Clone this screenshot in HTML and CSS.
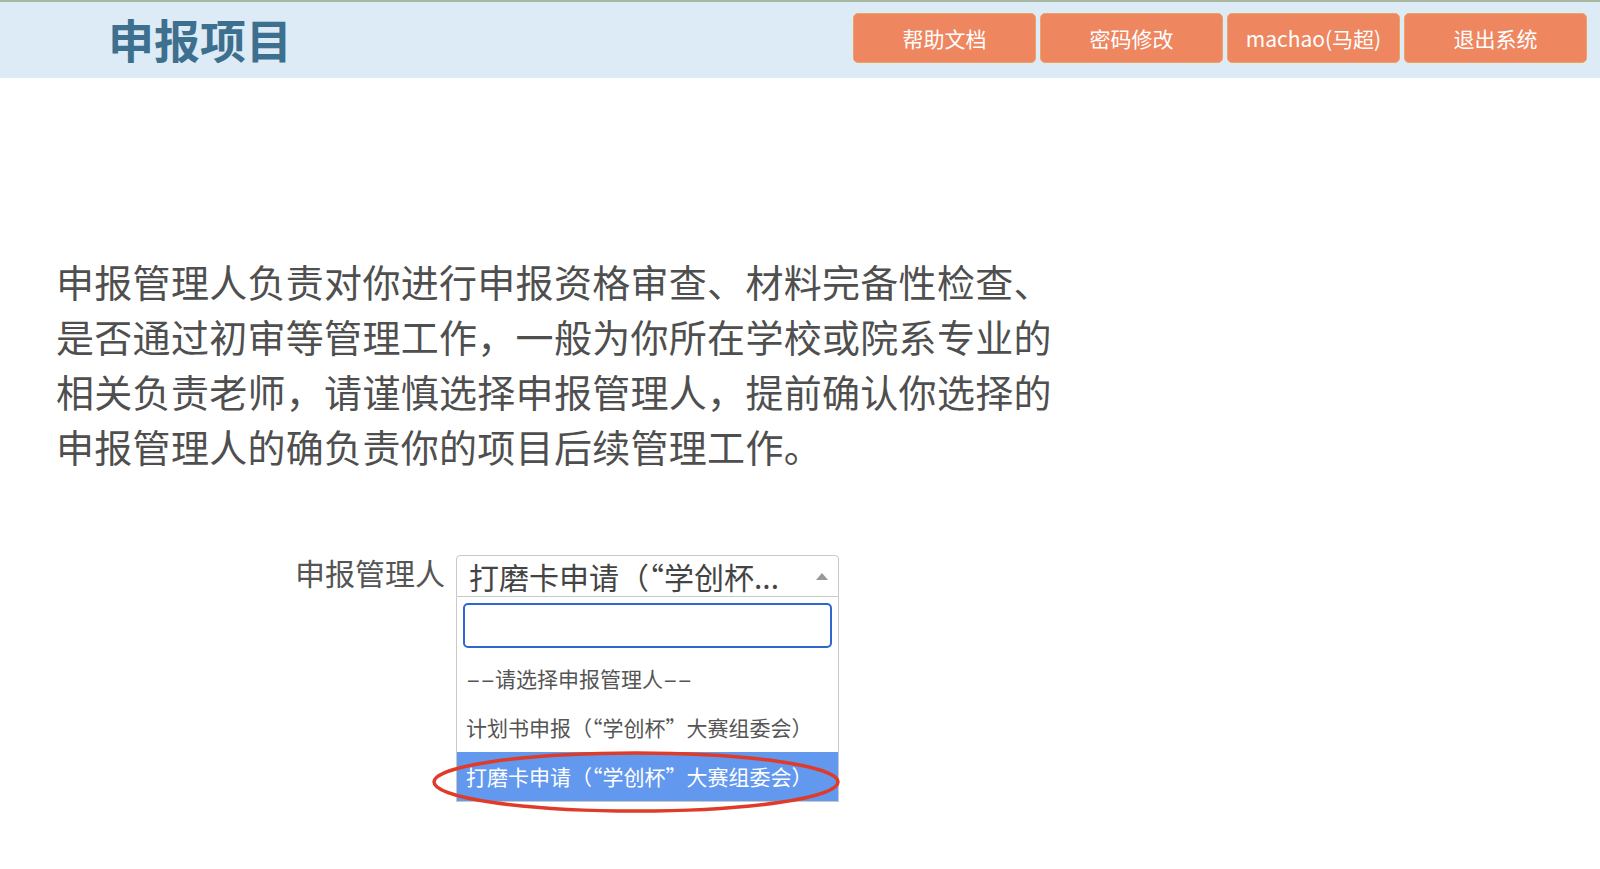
FILE: index.html
```html
<!DOCTYPE html>
<html lang="zh-CN">

<head>
    <meta charset="UTF-8">
    <title>申报项目</title>
    <link rel="stylesheet" href="styles.css">
</head>

<body>
    <div class="header">
        <h1 class="page-title">申报项目</h1>
        <div class="nav">
            <a class="nav-btn" href="#">帮助文档</a>
            <a class="nav-btn" href="#">密码修改</a>
            <a class="nav-btn user" href="#">machao(马超)</a>
            <a class="nav-btn" href="#">退出系统</a>
        </div>
    </div>

    <div class="main">
        <p class="notice">申报管理人负责对你进行申报资格审查、材料完备性检查、是否通过初审等管理工作，一般为你所在学校或院系专业的相关负责老师，请谨慎选择申报管理人，提前确认你选择的申报管理人的确负责你的项目后续管理工作。</p>

        <div class="form-row">
            <label class="form-label">申报管理人</label>
            <div class="select-box">
                <div class="select-current">
                    <span class="select-text">打磨卡申请（“学创杯...</span>
                    <span class="select-arrow"></span>
                </div>
                <div class="select-dropdown">
                    <div class="select-search">
                        <input type="text">
                    </div>
                    <ul class="select-options">
                        <li><span class="dash">--</span>请选择申报管理人<span class="dash">--</span></li>
                        <li>计划书申报（“学创杯”大赛组委会）</li>
                        <li class="active">打磨卡申请（“学创杯”大赛组委会）</li>
                    </ul>
                </div>
                <svg class="mark" width="412" height="68" viewBox="0 0 412 68">
                    <ellipse cx="206" cy="34" rx="202" ry="29" fill="none" stroke="#e03a28" stroke-width="3.5" />
                </svg>
            </div>
        </div>
    </div>
</body>

</html>
```

FILE: styles.css
```css
body {
    margin: 0;
    font-family: "Noto Sans CJK SC", "Noto Sans", sans-serif;
    background-color: #fff;
    color: #555;
}

.header {
    display: flex;
    justify-content: space-between;
    align-items: center;
    height: 76px;
    border-top: 2px solid #a7b8a3;
    background-color: #ddebf6;
}

.page-title {
    margin: -4px 0 0 108px;
    font-size: 46px;
    font-weight: bold;
    color: #3d6f8e;
    line-height: 1;
}

.nav {
    display: flex;
    align-self: flex-start;
    margin-top: 11px;
    margin-right: 13px;
}

.nav-btn {
    display: flex;
    justify-content: center;
    align-items: center;
    width: 181px;
    height: 48px;
    margin-left: 4px;
    background-color: #ee8660;
    border: 1px solid #eda366;
    border-radius: 5px;
    color: #fff;
    font-size: 21px;
    text-decoration: none;
}

.nav-btn.user {
    width: 171px;
}

.main {
    padding: 0 56px 60px;
}

.notice {
    width: 1010px;
    margin: 175px 0 0;
    font-size: 38px;
    line-height: 55px;
    letter-spacing: 0.3px;
    color: #4f4f4f;
}

.form-row {
    display: flex;
    align-items: flex-start;
    margin-top: 82px;
    margin-left: 239px;
}

.form-label {
    width: 150px;
    margin-top: -2px;
    margin-right: 11px;
    font-size: 30px;
    line-height: 38px;
    white-space: nowrap;
}

.select-box {
    position: relative;
    width: 383px;
}

.select-current {
    display: flex;
    justify-content: space-between;
    align-items: center;
    height: 40px;
    padding: 0 10px 0 12px;
    border: 1px solid #c9c9c9;
    border-radius: 4px 4px 0 0;
}

.select-text {
    font-size: 30px;
    line-height: 40px;
    color: #444;
    white-space: nowrap;
}

.select-arrow {
    width: 0;
    height: 0;
    border-left: 6px solid transparent;
    border-right: 6px solid transparent;
    border-bottom: 7px solid #999;
}

.select-dropdown {
    border: 1px solid #c9c9c9;
    border-top: none;
}

.select-search {
    padding: 6px;
}

.select-search input {
    display: block;
    box-sizing: border-box;
    width: 100%;
    height: 45px;
    border: 2px solid #2f66d0;
    border-radius: 5px;
    outline: none;
}

.select-options {
    list-style: none;
    margin: 0;
    padding: 0;
}

.select-options li {
    height: 49px;
    padding-left: 9px;
    font-size: 21px;
    line-height: 49px;
    color: #555;
    white-space: nowrap;
}

.select-options li.active {
    background-color: #6398ef;
    color: #fff;
}

.dash {
    display: inline-block;
    width: 29px;
    transform: scaleX(2);
    transform-origin: left center;
}

.mark {
    position: absolute;
    left: -26px;
    top: 193px;
}
```
